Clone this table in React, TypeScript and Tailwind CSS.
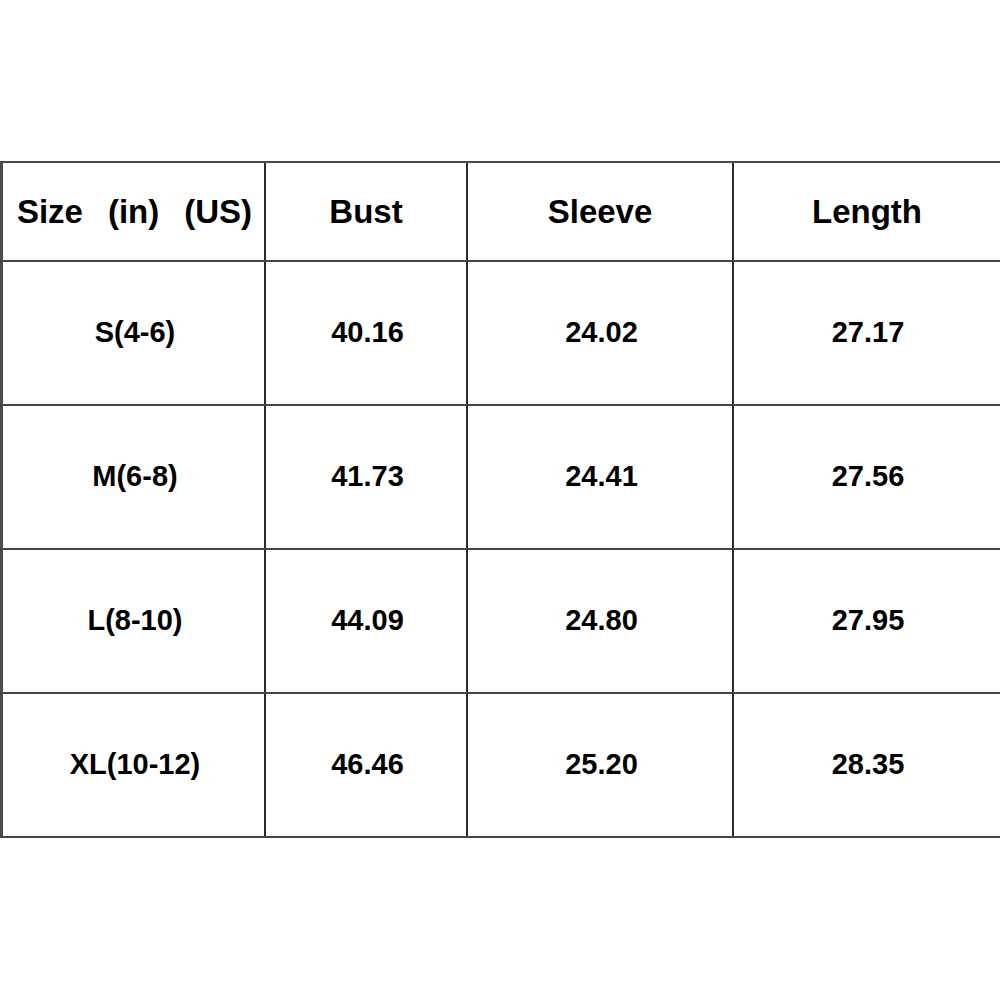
const rows = [
	["S(4-6)", "40.16", "24.02", "27.17"],
	["M(6-8)", "41.73", "24.41", "27.56"],
	["L(8-10)", "44.09", "24.80", "27.95"],
	["XL(10-12)", "46.46", "25.20", "28.35"],
];

const cols = "grid grid-cols-[263px_202px_266px_1fr]";
const cell = "flex items-center justify-center border-r-2 border-[#2a2a2a]";

export default function App() {
	return (
		<div className="h-[1000px] w-[1000px] bg-white pt-[161px] font-['Liberation_Sans',Arial,sans-serif] font-bold text-black">
			<div className="w-[1000px] border-t-2 border-l-[3px] border-[#4a4a4a]">
				<div className={`${cols} h-[99px] border-b-2 border-[#444] text-[33px]`}>
					<div className={`${cell} gap-[25px] pl-[2px]`}>
						<span>Size</span>
						<span>(in)</span>
						<span>(US)</span>
					</div>
					<div className={cell}>Bust</div>
					<div className={cell}>Sleeve</div>
					<div className="flex items-center justify-center">Length</div>
				</div>
				{rows.map((row) => (
					<div key={row[0]} className={`${cols} h-[144px] border-b-2 border-[#444] text-[29px]`}>
						{row.map((value, i) => (
							<div
								key={i}
								className={i === 3 ? "flex items-center justify-center pl-[2px]" : `${cell} pl-[3px]`}
							>
								{value}
							</div>
						))}
					</div>
				))}
			</div>
		</div>
	);
}
